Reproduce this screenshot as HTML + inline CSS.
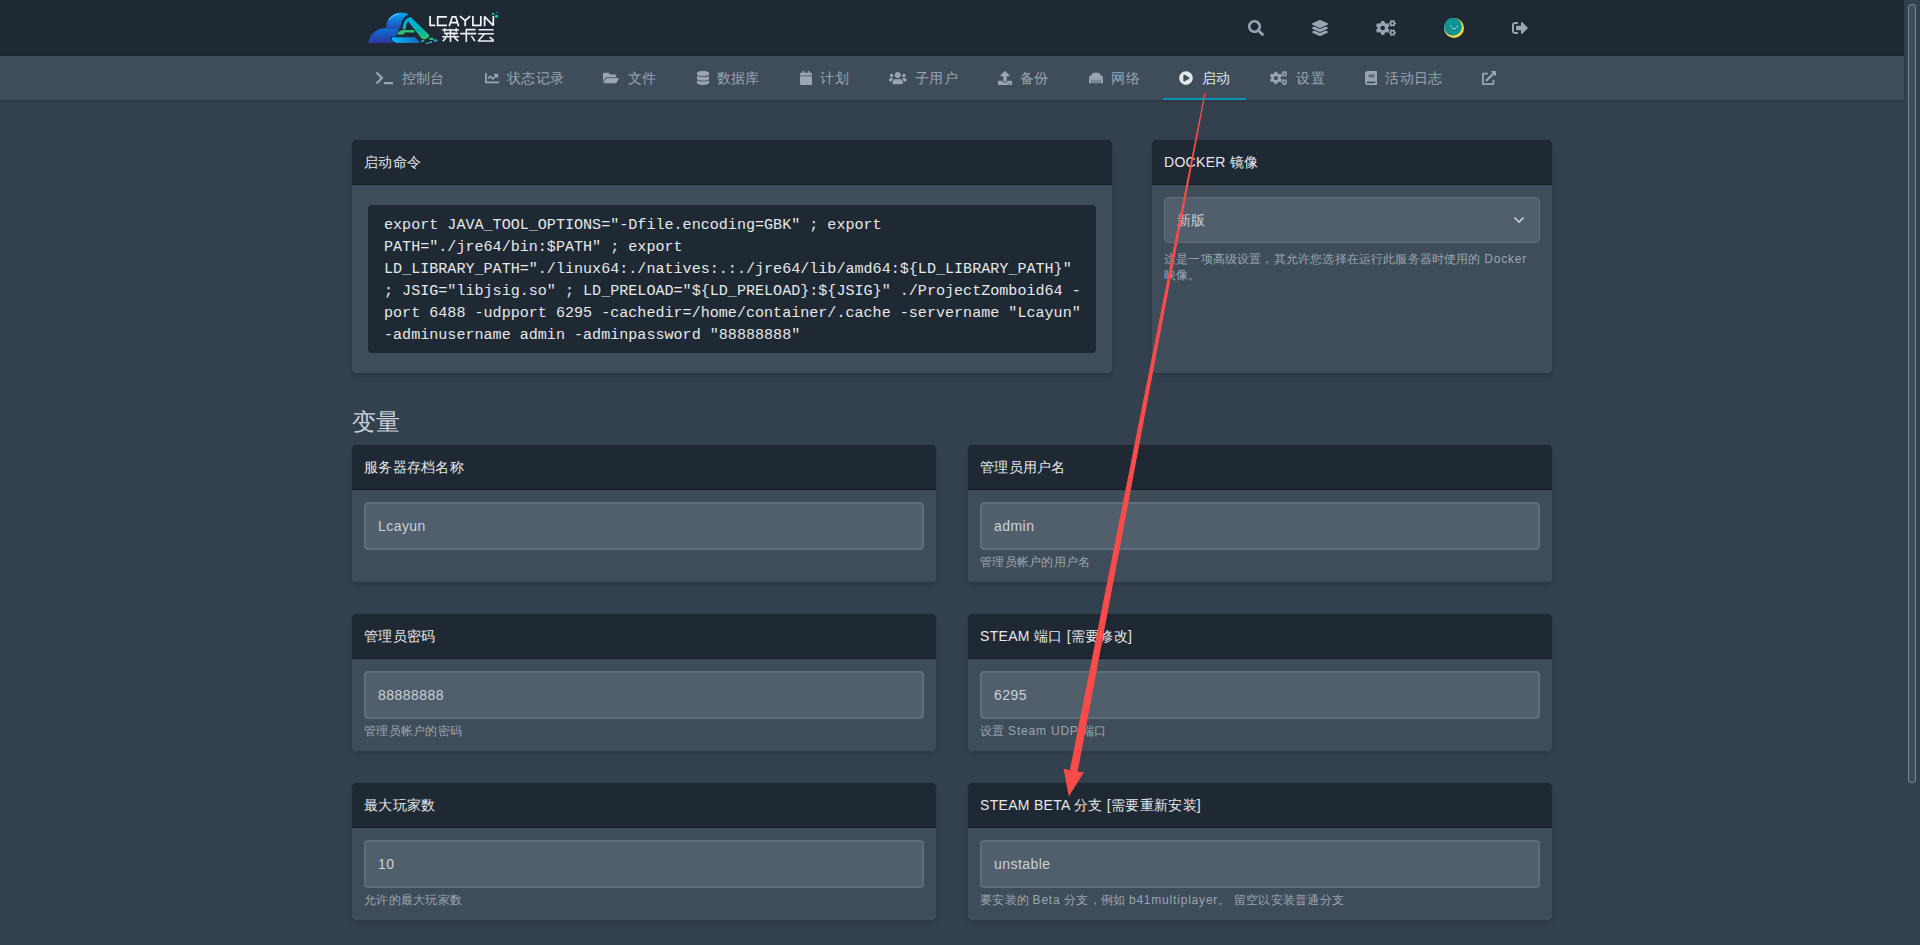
<!DOCTYPE html>
<html lang="zh">
<head>
<meta charset="utf-8">
<title>启动 - Lcayun</title>
<style>
*{box-sizing:border-box;margin:0;padding:0}
html,body{width:1920px;height:945px;overflow:hidden;background:#33404d}
body{font-family:"Liberation Sans",sans-serif;color:#cad1d8;position:relative;letter-spacing:0.015em}
.abs{position:absolute}
#hdr{position:absolute;left:0;top:0;width:1904px;height:56px;background:#1f2933;box-shadow:0 4px 6px -1px rgba(0,0,0,.1),0 2px 4px -1px rgba(0,0,0,.06);z-index:2}
#sub{position:absolute;left:0;top:56px;width:1904px;height:44px;background:#3f4d5a;box-shadow:0 1px 3px 0 rgba(0,0,0,.1),0 1px 2px 0 rgba(0,0,0,.06);z-index:3}
.ni{position:absolute;z-index:5;top:68px;height:20px;line-height:20px;font-size:14px;color:#9aa5b1;white-space:nowrap;letter-spacing:0.3px}
.ni.act{color:#e5e8eb}
.ic{position:absolute;z-index:5;fill:#9aa5b1}
.ic.act{fill:#e5e8eb}
.hi{position:absolute;z-index:5;fill:#9aa5b1}
.card{position:absolute;background:#3f4d5a;border-radius:4px;box-shadow:0 4px 6px -1px rgba(0,0,0,.1),0 2px 4px -1px rgba(0,0,0,.06)}
.card .th{position:absolute;left:0;top:0;right:0;height:45px;background:#1f2933;border-radius:4px 4px 0 0;border-bottom:1px solid #131a20}
.card .tt{position:absolute;left:12px;top:12px;height:20px;line-height:20px;font-size:14px;color:#e5e8eb;white-space:nowrap;letter-spacing:0.3px}
.inp{position:absolute;left:12px;right:12px;top:57px;height:48px;background:#515f6c;border:2px solid #606d7b;border-radius:4px;font-size:14px;line-height:20px;padding:12px;color:#cad1d8;letter-spacing:0.45px}
.help{position:absolute;left:12px;top:109px;font-size:12px;line-height:16px;color:#9aa5b1;white-space:nowrap;letter-spacing:0.25px}
.lt{letter-spacing:0.8px}
#code{position:absolute;left:16px;top:65px;width:728px;height:148px;background:#1f2933;border-radius:4px;padding:9px 16px 0;font-family:"Liberation Mono",monospace;font-size:15.08px;line-height:22px;color:#e5e8eb;white-space:pre;letter-spacing:0}
#sb{position:absolute;left:1908px;top:4px;width:8px;height:779px;border:1px solid #7b8793;background:#3f4d5a;border-radius:5px/4px}
</style>
</head>
<body>
<div id="hdr"></div>
<div id="sub"></div>
<!-- sub navigation -->
<svg class="ic" style="left:375.6px;top:71px;" width="17.50" height="14" viewBox="0 0 640 512"><path d="M257.981 272.971L63.638 467.314c-9.373 9.373-24.569 9.373-33.941 0L7.029 444.647c-9.357-9.357-9.375-24.522-.04-33.901L161.011 256 6.99 101.255c-9.335-9.379-9.317-24.544.04-33.901l22.667-22.667c9.373-9.373 24.569-9.373 33.941 0L257.981 239.03c9.373 9.372 9.373 24.568 0 33.941zM640 456v-32c0-13.255-10.745-24-24-24H312c-13.255 0-24 10.745-24 24v32c0 13.255 10.745 24 24 24h304c13.255 0 24-10.745 24-24z"/></svg>
<div class="ni" style="left:401.7px">控制台</div>
<svg class="ic" style="left:484.6px;top:71px;" width="14.00" height="14" viewBox="0 0 512 512"><path d="M496 384H64V80c0-8.84-7.160-16-16-16H16C7.16 64 0 71.16 0 80v336c0 17.67 14.33 32 32 32h464c8.84 0 16-7.16 16-16v-32c0-8.84-7.16-16-16-16zM464 96H345.94c-21.38 0-32.090 25.85-16.970 40.97l32.4 32.4L288 242.75l-73.37-73.37c-12.5-12.5-32.76-12.5-45.25 0l-68.69 68.69c-6.25 6.25-6.25 16.38 0 22.63l22.62 22.62c6.250 6.25 16.38 6.25 22.63 0L192 237.25l73.37 73.37c12.5 12.5 32.76 12.5 45.25 0l96-96 32.4 32.4c15.12 15.12 40.97 4.41 40.97-16.97V112c.01-8.84-7.15-16-15.99-16z"/></svg>
<div class="ni" style="left:507.0px">状态记录</div>
<svg class="ic" style="left:603.3px;top:71px;" width="15.75" height="14" viewBox="0 0 576 512"><path d="M572.694 292.093L500.27 416.248A63.997 63.997 0 0 1 444.989 448H45.025c-18.523 0-30.064-20.093-20.731-36.093l72.424-124.155A64 64 0 0 1 152 256h399.964c18.523 0 30.064 20.093 20.73 36.093zM152 224h328v-48c0-26.51-21.49-48-48-48H272l-64-64H48C21.49 64 0 85.49 0 112v278.046l69.077-118.418C86.214 242.25 117.989 224 152 224z"/></svg>
<div class="ni" style="left:628.2px">文件</div>
<svg class="ic" style="left:696.8px;top:71px;" width="12.25" height="14" viewBox="0 0 448 512"><path d="M448 73.143v45.714C448 159.143 347.667 192 224 192S0 159.143 0 118.857V73.143C0 32.857 100.333 0 224 0s224 32.857 224 73.143zM448 176v102.857C448 319.143 347.667 352 224 352S0 319.143 0 278.857V176c48.125 33.143 136.208 48.572 224 48.572S399.874 209.143 448 176zm0 160v102.857C448 479.143 347.667 512 224 512S0 479.143 0 438.857V336c48.125 33.143 136.208 48.572 224 48.572S399.874 369.143 448 336z"/></svg>
<div class="ni" style="left:716.9px">数据库</div>
<svg class="ic" style="left:799.7px;top:71px;" width="12.25" height="14" viewBox="0 0 448 512"><path d="M12 192h424c6.6 0 12 5.4 12 12v260c0 26.5-21.5 48-48 48H48c-26.5 0-48-21.5-48-48V204c0-6.6 5.4-12 12-12zm436-44v-36c0-26.5-21.5-48-48-48h-48V12c0-6.6-5.4-12-12-12h-40c-6.6 0-12 5.4-12 12v52H160V12c0-6.6-5.4-12-12-12h-40c-6.6 0-12 5.4-12 12v52H48C21.5 64 0 85.5 0 112v36c0 6.6 5.4 12 12 12h424c6.6 0 12-5.4 12-12z"/></svg>
<div class="ni" style="left:820.4px">计划</div>
<svg class="ic" style="left:889px;top:71px;" width="17.50" height="14" viewBox="0 0 640 512"><path d="M96 224c35.3 0 64-28.7 64-64s-28.7-64-64-64-64 28.7-64 64 28.7 64 64 64zm448 0c35.3 0 64-28.7 64-64s-28.7-64-64-64-64 28.7-64 64 28.7 64 64 64zm32 32h-64c-17.6 0-33.5 7.1-45.1 18.6 40.3 22.1 68.9 62 75.1 109.4h66c17.7 0 32-14.3 32-32v-32c0-35.3-28.7-64-64-64zm-256 0c61.9 0 112-50.1 112-112S381.9 32 320 32 208 82.1 208 144s50.1 112 112 112zm76.8 32h-8.3c-20.8 10-43.9 16-68.5 16s-47.6-6-68.5-16h-8.3C179.6 288 128 339.6 128 403.2V432c0 26.5 21.5 48 48 48h288c26.5 0 48-21.5 48-48v-28.8c0-63.6-51.6-115.2-115.2-115.2zm-223.7-13.4C161.5 263.1 145.6 256 128 256H64c-35.3 0-64 28.7-64 64v32c0 17.7 14.3 32 32 32h65.9c6.3-47.4 34.9-87.3 75.2-109.4z"/></svg>
<div class="ni" style="left:915.2px">子用户</div>
<svg class="ic" style="left:997.9px;top:71px;" width="14.00" height="14" viewBox="0 0 512 512"><path d="M296 384h-80c-13.3 0-24-10.7-24-24V192h-87.7c-17.8 0-26.7-21.5-14.1-34.1L242.3 5.7c7.5-7.5 19.8-7.5 27.3 0l152.2 152.2c12.6 12.6 3.7 34.1-14.1 34.1H320v168c0 13.3-10.7 24-24 24zm216-8v112c0 13.3-10.7 24-24 24H24c-13.3 0-24-10.7-24-24V376c0-13.3 10.7-24 24-24h136v8c0 30.9 25.1 56 56 56h80c30.9 0 56-25.1 56-56v-8h136c13.3 0 24 10.7 24 24zm-124 88c0-11-9-20-20-20s-20 9-20 20 9 20 20 20 20-9 20-20zm64 0c0-11-9-20-20-20s-20 9-20 20 9 20 20 20 20-9 20-20z"/></svg>
<div class="ni" style="left:1020.2px">备份</div>
<svg class="ic" style="left:1088.8px;top:71px;" width="14.00" height="14" viewBox="0 0 512 512"><path d="M496 192h-48v-48c0-8.8-7.2-16-16-16h-48V80c0-8.8-7.2-16-16-16H144c-8.8 0-16 7.2-16 16v48H80c-8.8 0-16 7.2-16 16v48H16c-8.8 0-16 7.2-16 16v224c0 8.8 7.2 16 16 16h80V320h32v128h64V320h32v128h64V320h32v128h64V320h32v128h80c8.8 0 16-7.2 16-16V208c0-8.8-7.2-16-16-16z"/></svg>
<div class="ni" style="left:1111.4px">网络</div>
<svg class="ic act" style="left:1178.8px;top:71px;" width="14.00" height="14" viewBox="0 0 512 512"><path d="M256 8C119 8 8 119 8 256s111 248 248 248 248-111 248-248S393 8 256 8zm115.7 272l-176 101c-15.8 8.8-35.7-2.5-35.7-21V152c0-18.4 19.8-29.8 35.7-21l176 107c16.4 9.2 16.4 32.9 0 42z"/></svg>
<div class="ni act" style="left:1201.6px">启动</div>
<svg class="ic" style="left:1269.6px;top:71px;" width="17.50" height="14" viewBox="0 0 640 512"><path d="M512.1 191l-8.2 14.3c-3 5.3-9.4 7.5-15.1 5.4-11.8-4.4-22.6-10.7-32.1-18.6-4.6-3.8-5.8-10.5-2.8-15.7l8.2-14.3c-6.9-8-12.3-17.3-15.900-27.4h-16.5c-6 0-11.2-4.3-12.2-10.3-2-12-2.1-24.6 0-37.1 1-6 6.2-10.4 12.2-10.4h16.5c3.6-10.1 9-19.4 15.9-27.4l-8.2-14.3c-3-5.2-1.9-11.9 2.8-15.7 9.5-7.9 20.4-14.2 32.1-18.6 5.7-2.1 12.1.1 15.1 5.4l8.2 14.3c10.5-1.9 21.2-1.9 31.7 0L552 6.3c3-5.3 9.4-7.5 15.1-5.4 11.8 4.4 22.6 10.7 32.1 18.6 4.6 3.8 5.8 10.5 2.8 15.7l-8.2 14.3c6.9 8 12.3 17.3 15.9 27.4h16.5c6 0 11.2 4.3 12.2 10.3 2 12 2.1 24.6 0 37.1-1 6-6.2 10.4-12.2 10.4h-16.5c-3.6 10.1-9 19.4-15.9 27.4l8.2 14.3c3 5.2 1.9 11.9-2.8 15.7-9.5 7.9-20.4 14.2-32.1 18.6-5.7 2.1-12.1-.1-15.1-5.4l-8.2-14.3c-10.4 1.9-21.2 1.9-31.7 0zm-10.5-58.8c38.5 29.6 82.4-14.3 52.8-52.8-38.5-29.7-82.4 14.3-52.8 52.8zM386.3 286.1l33.7 16.8c10.1 5.8 14.5 18.1 10.5 29.1-8.9 24.2-26.4 46.4-42.6 65.8-7.4 8.9-20.2 11.1-30.3 5.3l-29.1-16.8c-16 13.7-34.6 24.6-54.9 31.7v33.6c0 11.6-8.3 21.6-19.7 23.6-24.6 4.2-50.4 4.4-75.9 0-11.5-2-20-11.9-20-23.6V418c-20.3-7.2-38.9-18-54.9-31.7L74 403c-10 5.8-22.9 3.6-30.3-5.3-16.2-19.4-33.3-41.6-42.2-65.7-4-10.9.4-23.2 10.5-29.1l33.3-16.8c-3.9-20.9-3.9-42.4 0-63.4L12 205.8c-10.1-5.8-14.6-18.1-10.5-29 8.9-24.2 26-46.4 42.2-65.8 7.4-8.9 20.2-11.1 30.3-5.3l29.1 16.8c16-13.7 34.6-24.6 54.9-31.7V57.1c0-11.5 8.2-21.5 19.6-23.5 24.6-4.2 50.5-4.4 76-.1 11.5 2 20 11.9 20 23.6v33.6c20.3 7.2 38.9 18 54.9 31.7l29.1-16.8c10-5.8 22.9-3.6 30.3 5.3 16.2 19.4 33.2 41.6 42.1 65.8 4 10.9.1 23.2-10 29.1l-33.7 16.8c3.9 21 3.9 42.5 0 63.5zm-117.6 21.1c59.2-77-28.7-164.9-105.7-105.7-59.2 77 28.7 164.9 105.7 105.7zm243.4 182.7l-8.2 14.3c-3 5.3-9.4 7.5-15.1 5.4-11.8-4.4-22.6-10.7-32.1-18.6-4.6-3.8-5.8-10.5-2.8-15.7l8.2-14.3c-6.9-8-12.3-17.3-15.9-27.4h-16.5c-6 0-11.2-4.3-12.2-10.3-2-12-2.1-24.6 0-37.1 1-6 6.2-10.4 12.2-10.4h16.5c3.6-10.1 9-19.4 15.9-27.4l-8.2-14.3c-3-5.2-1.9-11.9 2.8-15.7 9.5-7.9 20.4-14.2 32.1-18.6 5.7-2.1 12.1.1 15.1 5.4l8.2 14.3c10.5-1.9 21.2-1.9 31.7 0l8.2-14.3c3-5.3 9.4-7.5 15.1-5.4 11.8 4.4 22.6 10.7 32.1 18.6 4.6 3.8 5.8 10.5 2.8 15.7l-8.2 14.3c6.9 8 12.3 17.3 15.9 27.4h16.5c6 0 11.2 4.3 12.2 10.3 2 12 2.1 24.6 0 37.1-1 6-6.2 10.4-12.2 10.4h-16.5c-3.6 10.1-9 19.4-15.9 27.4l8.2 14.3c3 5.2 1.9 11.9-2.8 15.7-9.5 7.9-20.4 14.2-32.1 18.6-5.7 2.1-12.1-.1-15.1-5.4l-8.2-14.3c-10.4 1.9-21.2 1.9-31.7 0zM501.6 431c38.5 29.6 82.4-14.3 52.8-52.8-38.5-29.6-82.4 14.3-52.8 52.8z"/></svg>
<div class="ni" style="left:1296.3px">设置</div>
<svg class="ic" style="left:1364.7px;top:71px;" width="12.25" height="14" viewBox="0 0 448 512"><path d="M448 360V24c0-13.3-10.7-24-24-24H96C43 0 0 43 0 96v320c0 53 43 96 96 96h328c13.3 0 24-10.7 24-24v-16c0-7.5-3.5-14.3-8.9-18.7-4.2-15.4-4.2-59.3 0-74.7 5.4-4.3 8.9-11.1 8.9-18.6zM128 134c0-3.3 2.7-6 6-6h212c3.3 0 6 2.7 6 6v20c0 3.3-2.7 6-6 6H134c-3.3 0-6-2.7-6-6v-20zm0 64c0-3.3 2.7-6 6-6h212c3.3 0 6 2.7 6 6v20c0 3.3-2.7 6-6 6H134c-3.3 0-6-2.7-6-6v-20zm253.4 250H96c-17.7 0-32-14.3-32-32 0-17.6 14.4-32 32-32h285.4c-1.9 17.1-1.9 46.9 0 64z"/></svg>
<div class="ni" style="left:1385.3px">活动日志</div>
<svg class="ic" style="left:1481.9px;top:71px;" width="14.00" height="14" viewBox="0 0 512 512"><path d="M432,320H400a16,16,0,0,0-16,16V448H64V128H208a16,16,0,0,0,16-16V80a16,16,0,0,0-16-16H48A48,48,0,0,0,0,112V464a48,48,0,0,0,48,48H400a48,48,0,0,0,48-48V336A16,16,0,0,0,432,320ZM488,0h-128c-21.37,0-32.05,25.91-17,41l35.730,35.73L135,320.37a24,24,0,0,0,0,34L157.67,377a24,24,0,0,0,34,0L435.28,133.32,471,169c15,15,41,4.5,41-17V24A24,24,0,0,0,488,0Z"/></svg>
<div class="abs" style="left:1163px;top:98px;width:83px;height:2px;background:#0891b2;z-index:4"></div>
<!-- logo -->
<svg class="abs" style="left:366px;top:8px;z-index:5" width="140" height="40" viewBox="0 0 140 40">
<defs>
<linearGradient id="gHill" x1="0" y1="0" x2="0" y2="1"><stop offset="0" stop-color="#0b6fd6"/><stop offset="1" stop-color="#2e36a0"/></linearGradient>
<linearGradient id="gBump" x1="0" y1="0" x2="0" y2="1"><stop offset="0" stop-color="#05a6ee"/><stop offset="0.6" stop-color="#1174d4"/><stop offset="1" stop-color="#2a46b0"/></linearGradient>
<linearGradient id="gBand" x1="0" y1="0" x2="1" y2="0"><stop offset="0" stop-color="#00b8f6"/><stop offset="1" stop-color="#1665c4"/></linearGradient>
<linearGradient id="gA" x1="0" y1="0" x2="0" y2="1"><stop offset="0" stop-color="#00acee"/><stop offset="0.55" stop-color="#00b5b0"/><stop offset="1" stop-color="#2fc46c"/></linearGradient>
</defs>
<path d="M2,35 C4,26.5 10,20.4 18.5,20.3 L33,20.3 L28,35 Z" fill="url(#gHill)"/>
<path d="M20.3,19.5 C20,10.5 27,4.4 35,4.4 C38.5,4.4 41,5.3 42.5,6.4 C37.5,8.5 35,13 34.5,20.3 L20.3,20.3 Z" fill="url(#gBump)"/>
<path d="M23,12 C25,8.5 29,6.5 33,6.2" stroke="#bfe6ff" stroke-width="0.8" fill="none" opacity="0.8"/>
<g stroke="#1f2933" stroke-width="1.6" paint-order="stroke" stroke-linejoin="round">
<path d="M26,29.2 L49,29.2 L54.5,35 L33.5,35 C28.5,35 26,33 26,31 Z" fill="url(#gBand)"/>
<path d="M36.6,22 C36.6,15 39.5,10.2 44,9.3 L45.2,9.6 L63,26.8 L63,29 L59.5,31.2 L56.3,31.2 L42.2,13.4 C40.6,14.6 39.9,17.5 39.9,22 Z" fill="url(#gA)"/>
<path d="M31.3,26.6 L31.5,25.2 C33,23.3 35,22.2 37.5,22.1 L47.6,22.1 L48.8,24.6 L38.3,24.6 L38.1,26.6 Z" fill="#2ec27a"/>
</g>
<g fill="#13b9c9">
<rect x="55" y="32.2" width="3.2" height="1.7"/><rect x="63" y="33.4" width="3" height="1.7" fill="#1aa6e0"/><rect x="67.7" y="31.4" width="3.6" height="2.2" fill="#17b2d2"/><rect x="60" y="34.6" width="2.6" height="1.4" fill="#22c07a"/><rect x="63.4" y="29.8" width="4" height="2.2" fill="#2fc46c"/>
</g>
<g stroke="#f4f6f8" stroke-width="1.7" fill="none" stroke-linecap="butt" stroke-linejoin="miter">
<path d="M64.1,8 L64.1,17.4 L69.4,17.4"/>
<path d="M80.9,8.8 L71.7,8.8 L71.7,17.4 L80.9,17.4"/>
<path d="M83.2,18.2 L86.3,8.85 L89.7,8.85 L92.6,18.2 M84.6,14.6 L91.2,14.6"/>
<path d="M94,8.2 L99.2,12.6 L104.2,8.2 M99.2,12.6 L99.2,18.2"/>
<path d="M106.9,8 L106.9,17.4 L114.8,17.4 L114.8,8"/>
<path d="M118.6,18.2 L118.6,8.6 L127.3,17.6 L127.3,8" stroke-linejoin="bevel"/>
</g>
<rect x="125.9" y="4.9" width="2.3" height="2.1" fill="#10b8a6"/><rect x="130.7" y="3.9" width="1.4" height="1.3" fill="#16a6e6"/><rect x="129" y="7" width="2.9" height="2.7" fill="#10c4bc"/>
<g stroke="#eef1f4" stroke-width="1.6" fill="none">
<path d="M76.2,22 L92.9,22 M78.7,20.3 L78.7,23.7 M90.2,20.3 L90.2,23.7 M77.9,25.4 L91.9,25.4 M76.2,28.8 L92.9,28.8 M84.5,20.8 L84.5,34 M76.8,33.2 L80,29.6 M88.5,29.6 L92.3,33.2 M80.3,26.3 L81.4,27.6 M88.6,26.3 L87.5,27.6"/>
<path d="M100.3,20.7 L100.3,34 M100.3,21.6 L109.6,21.6 M94.2,25.6 L110.3,25.6 M105.4,27.9 L108.8,33"/>
<path d="M112.6,21.8 L127.6,21.8 M112.2,25.8 L127.8,25.8 M118.1,26.2 L112.6,32.6 L112.6,33 L128,33 M123.6,29.2 L127.4,32.2"/>
</g>
</svg>
<!-- avatar -->
<svg class="abs" style="left:1444px;top:18px;z-index:5" width="20" height="20" viewBox="0 0 20 20">
<circle cx="10" cy="10" r="10" fill="#f2d74b"/>
<circle cx="9" cy="8.7" r="8.9" fill="#0e9391"/>
<rect x="6.2" y="7.4" width="1.3" height="1.1" fill="#d9f0ee"/><rect x="12.7" y="8.1" width="1.3" height="1.1" fill="#d9f0ee"/><path d="M8.2,10.3 Q9.9,11.3 11.6,10.3" stroke="#d9f0ee" stroke-width="0.9" fill="none"/>
</svg>
<!-- header icons -->
<svg class="hi" style="left:1248px;top:20px;" width="16.00" height="16" viewBox="0 0 512 512"><path d="M505 442.7L405.3 343c-4.5-4.5-10.6-7-17-7H372c27.6-35.3 44-79.7 44-128C416 93.1 322.9 0 208 0S0 93.1 0 208s93.1 208 208 208c48.3 0 92.7-16.4 128-44v16.3c0 6.4 2.5 12.5 7 17l99.7 99.7c9.4 9.4 24.6 9.4 33.9 0l28.3-28.3c9.4-9.4 9.4-24.6.1-34zM208 336c-70.7 0-128-57.2-128-128 0-70.7 57.2-128 128-128 70.7 0 128 57.2 128 128 0 70.7-57.2 128-128 128z"/></svg>
<svg class="hi" style="left:1312px;top:20px;" width="16.00" height="16" viewBox="0 0 512 512"><path d="M12.41 148.02l232.94 105.67c6.8 3.09 14.49 3.09 21.29 0l232.94-105.67c16.55-7.51 16.55-32.52 0-40.03L266.65 2.31a25.607 25.607 0 0 0-21.29 0L12.41 107.98c-16.55 7.51-16.55 32.53 0 40.04zm487.18 88.28l-58.09-26.33-161.64 73.27c-7.56 3.43-15.59 5.17-23.86 5.17s-16.29-1.740-23.86-5.17L70.51 209.97l-58.1 26.33c-16.55 7.5-16.55 32.5 0 40l232.94 105.59c6.8 3.08 14.49 3.08 21.29 0L499.59 276.3c16.55-7.5 16.55-32.5 0-40zm0 127.8l-57.87-26.23-161.86 73.37c-7.56 3.43-15.59 5.17-23.86 5.17s-16.29-1.74-23.86-5.17L70.29 337.87 12.41 364.1c-16.55 7.5-16.55 32.5 0 40l232.94 105.59c6.8 3.08 14.49 3.08 21.29 0L499.59 404.1c16.55-7.5 16.55-32.5 0-40z"/></svg>
<svg class="hi" style="left:1376px;top:20px;" width="20.00" height="16" viewBox="0 0 640 512"><path d="M512.1 191l-8.2 14.3c-3 5.3-9.4 7.5-15.1 5.4-11.8-4.4-22.6-10.7-32.1-18.6-4.6-3.8-5.8-10.5-2.8-15.7l8.2-14.3c-6.9-8-12.3-17.3-15.900-27.4h-16.5c-6 0-11.2-4.3-12.2-10.3-2-12-2.1-24.6 0-37.1 1-6 6.2-10.4 12.2-10.4h16.5c3.6-10.1 9-19.4 15.9-27.4l-8.2-14.3c-3-5.2-1.9-11.9 2.8-15.7 9.5-7.9 20.4-14.2 32.1-18.6 5.7-2.1 12.1.1 15.1 5.4l8.2 14.3c10.5-1.9 21.2-1.9 31.7 0L552 6.3c3-5.3 9.4-7.5 15.1-5.4 11.8 4.4 22.6 10.7 32.1 18.6 4.6 3.8 5.8 10.5 2.8 15.7l-8.2 14.3c6.9 8 12.3 17.3 15.9 27.4h16.5c6 0 11.2 4.3 12.2 10.3 2 12 2.1 24.6 0 37.1-1 6-6.2 10.4-12.2 10.4h-16.5c-3.6 10.1-9 19.4-15.9 27.4l8.2 14.3c3 5.2 1.9 11.9-2.8 15.7-9.5 7.9-20.4 14.2-32.1 18.6-5.7 2.1-12.1-.1-15.1-5.4l-8.2-14.3c-10.4 1.9-21.2 1.9-31.7 0zm-10.5-58.8c38.5 29.6 82.4-14.3 52.8-52.8-38.5-29.7-82.4 14.3-52.8 52.8zM386.3 286.1l33.7 16.8c10.1 5.8 14.5 18.1 10.5 29.1-8.9 24.2-26.4 46.4-42.6 65.8-7.4 8.9-20.2 11.1-30.3 5.3l-29.1-16.8c-16 13.7-34.6 24.6-54.9 31.7v33.6c0 11.6-8.3 21.6-19.7 23.6-24.6 4.2-50.4 4.4-75.9 0-11.5-2-20-11.9-20-23.6V418c-20.3-7.2-38.9-18-54.9-31.7L74 403c-10 5.8-22.9 3.6-30.3-5.3-16.2-19.4-33.3-41.6-42.2-65.7-4-10.9.4-23.2 10.5-29.1l33.3-16.8c-3.9-20.9-3.9-42.4 0-63.4L12 205.8c-10.1-5.8-14.6-18.1-10.5-29 8.9-24.2 26-46.4 42.2-65.8 7.4-8.9 20.2-11.1 30.3-5.3l29.1 16.8c16-13.7 34.6-24.6 54.9-31.7V57.1c0-11.5 8.2-21.5 19.6-23.5 24.6-4.2 50.5-4.4 76-.1 11.5 2 20 11.9 20 23.6v33.6c20.3 7.2 38.9 18 54.9 31.7l29.1-16.8c10-5.8 22.9-3.6 30.3 5.3 16.2 19.4 33.2 41.6 42.1 65.8 4 10.9.1 23.2-10 29.1l-33.7 16.8c3.9 21 3.9 42.5 0 63.5zm-117.6 21.1c59.2-77-28.7-164.9-105.7-105.7-59.2 77 28.7 164.9 105.7 105.7zm243.4 182.7l-8.2 14.3c-3 5.3-9.4 7.5-15.1 5.4-11.8-4.4-22.6-10.7-32.1-18.6-4.6-3.8-5.8-10.5-2.8-15.7l8.2-14.3c-6.9-8-12.3-17.3-15.9-27.4h-16.5c-6 0-11.2-4.3-12.2-10.3-2-12-2.1-24.6 0-37.1 1-6 6.2-10.4 12.2-10.4h16.5c3.6-10.1 9-19.4 15.9-27.4l-8.2-14.3c-3-5.2-1.9-11.9 2.8-15.7 9.5-7.9 20.4-14.2 32.1-18.6 5.7-2.1 12.1.1 15.1 5.4l8.2 14.3c10.5-1.9 21.2-1.9 31.7 0l8.2-14.3c3-5.3 9.4-7.5 15.1-5.4 11.8 4.4 22.6 10.7 32.1 18.6 4.6 3.8 5.8 10.5 2.8 15.7l-8.2 14.3c6.9 8 12.3 17.3 15.9 27.4h16.5c6 0 11.2 4.3 12.2 10.3 2 12 2.1 24.6 0 37.1-1 6-6.2 10.4-12.2 10.4h-16.5c-3.6 10.1-9 19.4-15.9 27.4l8.2 14.3c3 5.2 1.9 11.9-2.8 15.7-9.5 7.9-20.4 14.2-32.1 18.6-5.7 2.1-12.1-.1-15.1-5.4l-8.2-14.3c-10.4 1.9-21.2 1.9-31.7 0zM501.6 431c38.5 29.6 82.4-14.3 52.8-52.8-38.5-29.6-82.4 14.3-52.8 52.8z"/></svg>
<svg class="hi" style="left:1512px;top:20px;" width="16.00" height="16" viewBox="0 0 512 512"><path d="M497 273L329 441c-15 15-41 4.5-41-17v-96H152c-13.3 0-24-10.7-24-24v-96c0-13.3 10.7-24 24-24h136V88c0-21.4 25.9-32 41-17l168 168c9.3 9.4 9.3 24.6 0 34zM192 436v-40c0-6.6-5.4-12-12-12H96c-17.7 0-32-14.3-32-32V160c0-17.7 14.3-32 32-32h84c6.6 0 12-5.4 12-12V76c0-6.6-5.4-12-12-12H96c-53 0-96 43-96 96v192c0 53 43 96 96 96h84c6.6 0 12-5.4 12-12z"/></svg>

<!-- startup command card -->
<div class="card" style="left:352px;top:140px;width:760px;height:233px">
  <div class="th"><div class="tt">启动命令</div></div>
  <div id="code">export JAVA_TOOL_OPTIONS="-Dfile.encoding=GBK" ; export
PATH="./jre64/bin:$PATH" ; export
LD_LIBRARY_PATH="./linux64:./natives:.:./jre64/lib/amd64:${LD_LIBRARY_PATH}"
; JSIG="libjsig.so" ; LD_PRELOAD="${LD_PRELOAD}:${JSIG}" ./ProjectZomboid64 -
port 6488 -udpport 6295 -cachedir=/home/container/.cache -servername "Lcayun"
-adminusername admin -adminpassword "88888888"</div>
</div>

<!-- docker card -->
<div class="card" style="left:1152px;top:140px;width:400px;height:233px">
  <div class="th"><div class="tt">DOCKER 镜像</div></div>
  <div class="abs" style="left:12px;top:57px;width:376px;height:46px;background:#515f6c;border:1px solid #606d7b;border-radius:4px"></div>
  <div class="abs" style="left:25px;top:70px;font-size:14px;line-height:20px;color:#cad1d8;letter-spacing:0.2px">新版</div>
  <svg class="abs" style="left:361px;top:75px" width="12" height="10" viewBox="0 0 12 10"><path d="M1.5,2.5 L6,7 L10.5,2.5" stroke="#cad1d8" stroke-width="1.6" fill="none"/></svg>
  <div class="abs" style="left:12px;top:111px;font-size:12px;line-height:16px;color:#9aa5b1;letter-spacing:0.18px;white-space:nowrap">这是一项高级设置，其允许您选择在运行此服务器时使用的 <span class="lt">Docker</span><br>映像。</div>
</div>

<div class="abs" style="left:352px;top:406px;font-size:24px;line-height:32px;color:#cad1d8;letter-spacing:0">变量</div>

<div class="card" style="left:352px;top:445px;width:584px;height:137px">
  <div class="th"><div class="tt">服务器存档名称</div></div>
  <div class="inp">Lcayun</div>
</div>
<div class="card" style="left:968px;top:445px;width:584px;height:137px">
  <div class="th"><div class="tt">管理员用户名</div></div>
  <div class="inp">admin</div>
  <div class="help">管理员帐户的用户名</div>
</div>
<div class="card" style="left:352px;top:614px;width:584px;height:137px">
  <div class="th"><div class="tt">管理员密码</div></div>
  <div class="inp">88888888</div>
  <div class="help">管理员帐户的密码</div>
</div>
<div class="card" style="left:968px;top:614px;width:584px;height:137px">
  <div class="th"><div class="tt">STEAM 端口 [需要修改]</div></div>
  <div class="inp">6295</div>
  <div class="help">设置 <span class="lt">Steam UDP</span> 端口</div>
</div>
<div class="card" style="left:352px;top:783px;width:584px;height:137px">
  <div class="th"><div class="tt">最大玩家数</div></div>
  <div class="inp">10</div>
  <div class="help">允许的最大玩家数</div>
</div>
<div class="card" style="left:968px;top:783px;width:584px;height:137px">
  <div class="th"><div class="tt">STEAM BETA 分支 [需要重新安装]</div></div>
  <div class="inp">unstable</div>
  <div class="help">要安装的 <span class="lt">Beta</span> 分支，例如 <span class="lt">b41multiplayer</span>。 留空以安装普通分支</div>
</div>

<!-- annotation arrow -->
<svg class="abs" style="left:0;top:0;z-index:20" width="1920" height="945" viewBox="0 0 1920 945">
<path d="M1204.4,92.9 L1205.6,93.1 L1077.6,771.8 L1084,772.3 L1068.8,796.5 L1063.6,768.8 L1069.8,770.2 Z" fill="#fa4b4b"/>
</svg>
<div id="sb"></div>
</body>
</html>
